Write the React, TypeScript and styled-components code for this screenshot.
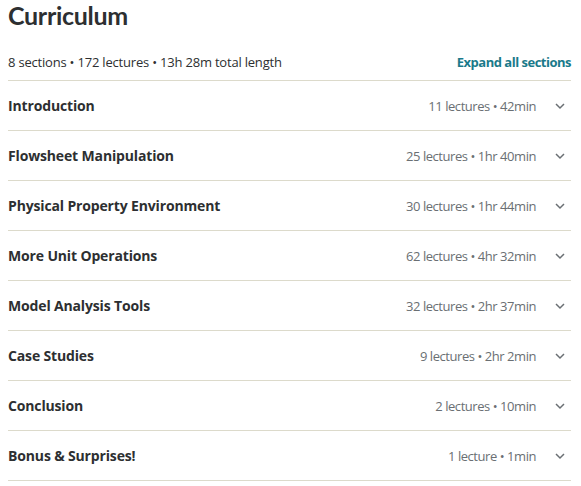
import { createGlobalStyle } from "styled-components";
import styled from "styled-components";

const GlobalStyle = createGlobalStyle`
  body {
    margin: 0;
    background: #fff;
    font-family: "Open Sans", "Noto Sans", sans-serif;
    color: #2d2f31;
  }
`;

type Section = {
  title: string;
  meta: string;
};

const sections: Section[] = [
  { title: "Introduction", meta: "11 lectures • 42min" },
  { title: "Flowsheet Manipulation", meta: "25 lectures • 1hr 40min" },
  { title: "Physical Property Environment", meta: "30 lectures • 1hr 44min" },
  { title: "More Unit Operations", meta: "62 lectures • 4hr 32min" },
  { title: "Model Analysis Tools", meta: "32 lectures • 2hr 37min" },
  { title: "Case Studies", meta: "9 lectures • 2hr 2min" },
  { title: "Conclusion", meta: "2 lectures • 10min" },
  { title: "Bonus & Surprises!", meta: "1 lecture • 1min" },
];

const Wrapper = styled.div`
  width: 563px;
  padding: 0 10px 0 8px;
`;

const Heading = styled.h2`
  margin: 0;
  padding-top: 1px;
  font-family: Lato, "Open Sans", sans-serif;
  font-size: 25px;
  line-height: 28px;
  font-weight: 700;
  letter-spacing: -0.3px;
`;

const Summary = styled.div`
  display: flex;
  align-items: center;
  justify-content: space-between;
  height: 36px;
  padding-top: 15px;
  font-size: 13px;
  letter-spacing: -0.2px;
`;

const ExpandLink = styled.button`
  border: none;
  background: none;
  padding: 0;
  font: inherit;
  font-weight: 700;
  letter-spacing: -0.5px;
  color: #1a7a8a;
  cursor: pointer;
`;

const List = styled.div`
  border-top: 1px solid #dcdacb;
`;

const Row = styled.div`
  display: flex;
  align-items: center;
  height: 49px;
  border-bottom: 1px solid #dcdacb;
`;

const Title = styled.span`
  flex: 1;
  font-size: 14px;
  font-weight: 700;
  letter-spacing: -0.15px;
`;

const Meta = styled.span`
  font-size: 13px;
  letter-spacing: -0.45px;
  color: #6a6f73;
`;

const Chevron = styled.svg`
  width: 12px;
  height: 12px;
  margin: 0 5px 0 18px;
  color: #6a6f73;
`;

export default function App() {
  return (
    <>
      <GlobalStyle />
      <Wrapper>
        <Heading>Curriculum</Heading>
        <Summary>
          <span>8 sections • 172 lectures • 13h 28m total length</span>
          <ExpandLink>Expand all sections</ExpandLink>
        </Summary>
        <List>
          {sections.map((s) => (
            <Row key={s.title}>
              <Title>{s.title}</Title>
              <Meta>{s.meta}</Meta>
              <Chevron viewBox="0 0 12 12" fill="none">
                <path d="M2 4l4 4 4-4" stroke="currentColor" strokeWidth="1.5" />
              </Chevron>
            </Row>
          ))}
        </List>
      </Wrapper>
    </>
  );
}
